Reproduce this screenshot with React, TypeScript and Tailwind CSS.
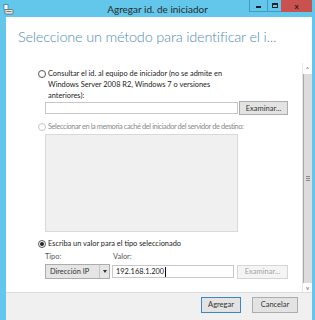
import React from 'react';

const Radio: React.FC<{ checked?: boolean; disabled?: boolean }> = ({ checked, disabled }) => (
  <span
    className={`mt-[1.5px] flex h-[8px] w-[8px] shrink-0 items-center justify-center rounded-full border bg-white ${
      disabled ? 'border-[#c8c8c8]' : 'border-[#555]'
    }`}
  >
    {checked && <span className="h-[4px] w-[4px] rounded-full bg-[#222]" />}
  </span>
);

const Btn: React.FC<{ label: string; disabled?: boolean; primary?: boolean; className?: string }> = ({
  label,
  disabled,
  primary,
  className = '',
}) => (
  <div
    className={`flex items-center justify-center border text-[7.5px] ${className} ${
      disabled
        ? 'border-[#d5d5d5] bg-[#f4f4f4] text-[#a3a3a3]'
        : primary
        ? 'border-[#3d86c4] bg-[#e3e3e3] text-[#333]'
        : 'border-[#adadad] bg-[#e3e3e3] text-[#333]'
    }`}
  >
    {label}
  </div>
);

const App: React.FC = () => {
  return (
    <div
      className="flex h-[320px] w-[315px] flex-col overflow-hidden bg-[#62c7ea] text-[#222]"
      style={{ fontFamily: 'Lato, "Liberation Sans", sans-serif' }}
    >
      {/* title bar */}
      <div className="relative flex h-[17px] shrink-0 items-center">
        <svg className="ml-[3px] mt-[1px]" width="11" height="11" viewBox="0 0 11 11">
          <rect x="1" y="0.5" width="4" height="5" fill="#fff" stroke="#3a7fb0" strokeWidth="0.8" />
          <rect x="2" y="5.5" width="8" height="4.5" rx="0.8" fill="#e9e9e9" stroke="#666" strokeWidth="0.8" />
          <rect x="3.5" y="7" width="5" height="1" fill="#777" />
        </svg>
        <div className="absolute inset-x-0 top-[3px] text-center text-[10px] leading-[12px] text-[#2b2b2b]">
          Agregar id. de iniciador
        </div>
        <div className="absolute right-[3px] top-0 flex h-[12px]">
          <div className="flex w-[18px] items-center justify-center border-b border-l border-[#3f9cc0]">
            <span className="mt-[3px] h-[2px] w-[5px] bg-[#222]" />
          </div>
          <div className="flex w-[14px] items-center justify-center border-b border-l border-[#3f9cc0]">
            <span className="h-[5px] w-[6px] border border-t-2 border-[#222]" />
          </div>
          <div className="flex w-[31px] items-center justify-center bg-[#c9514e] text-[8px] font-bold leading-none text-[#222]">
            x
          </div>
        </div>
      </div>

      {/* body */}
      <div className="ml-[6px] mr-[3px] flex flex-1 flex-col bg-white">
        <div className="h-[43px] shrink-0 pl-[12px] pt-[11px]">
          <div className="whitespace-nowrap text-[14.5px] font-light leading-[18px] tracking-[-0.2px] text-[#4f8db3]">
            Seleccione un método para identificar el i...
          </div>
        </div>

        <div className="flex flex-1">
          <div className="flex-1 whitespace-nowrap pl-[32px] pr-[14px] pt-[8px] text-[7.4px] leading-[11px]">
            <div className="flex gap-[2px]">
              <Radio />
              <div>
                Consultar el id. al equipo de iniciador (no se admite en
                <br />
                Windows Server 2008 R2, Windows 7 o versiones
                <br />
                anteriores):
              </div>
            </div>
            <div className="ml-[7px] flex h-[14px] items-center gap-[1px]">
              <div className="h-[12px] flex-1 border border-[#c8c8c8] bg-white" />
              <Btn label="Examinar..." className="h-[14px] w-[49px]" />
            </div>

            <div className="mt-[6px] flex gap-[2px] text-[#8a8a8a]">
              <Radio disabled />
              <div className="tracking-[-0.4px]">
                Seleccionar en la memoria caché del iniciador del servidor de destino:
              </div>
            </div>
            <div className="ml-[7px] mt-[2px] h-[98px] w-[193px] border border-[#d9d9d9] bg-[#f0f0f0]" />

            <div className="mt-[6px] flex gap-[2px]">
              <Radio checked />
              <div>Escriba un valor para el tipo seleccionado</div>
            </div>
            <div className="ml-[7px] mt-[2px] flex text-[#555]">
              <div className="w-[68px]">Tipo:</div>
              <div>Valor:</div>
            </div>
            <div className="ml-[7px] mt-[2px] flex h-[15px] items-center">
              <div className="flex h-[15px] w-[65px] border border-[#acacac] bg-[#e5e5e5]">
                <div className="flex flex-1 items-center pl-[4px] text-[#333]">Dirección IP</div>
                <div className="flex w-[10px] items-center justify-center border-l border-[#c4c4c4]">
                  <span className="border-x-[2.5px] border-t-[3px] border-x-transparent border-t-[#333]" />
                </div>
              </div>
              <div className="ml-[2px] flex h-[13px] w-[122px] items-center border border-[#c8c8c8] bg-white pl-[3px] text-[#222]">
                192.168.1.200
                <span className="ml-[0.5px] h-[10px] w-[1px] bg-[#111]" />
              </div>
              <Btn label="Examinar..." disabled className="ml-[3px] h-[14px] w-[51px]" />
            </div>
          </div>

          {/* scrollbar */}
          <div className="mt-[3px] flex w-[10px] flex-col border-l border-[#e6e6e6]">
            <div className="flex h-[11px] items-center justify-center text-[6px] leading-none text-[#606060]">
              ^
            </div>
            <div className="flex flex-1 items-center justify-center border-l border-[#a9a9a9] bg-[#dcdcdc]">
              <div className="flex flex-col gap-[1px]">
                <span className="h-[1px] w-[4px] bg-[#888]" />
                <span className="h-[1px] w-[4px] bg-[#888]" />
                <span className="h-[1px] w-[4px] bg-[#888]" />
              </div>
            </div>
            <div className="flex h-[9px] items-center justify-center text-[6px] leading-none text-[#606060]">
              v
            </div>
          </div>
        </div>

        <div className="flex h-[28px] shrink-0 items-start justify-end gap-[11px] border-t border-[#dcdcdc] bg-[#f0f0f0] pr-[14px] pt-[4px]">
          <Btn label="Agregar" primary className="h-[16px] w-[40px]" />
          <Btn label="Cancelar" className="h-[16px] w-[46px]" />
        </div>
      </div>
    </div>
  );
};

export default App;
